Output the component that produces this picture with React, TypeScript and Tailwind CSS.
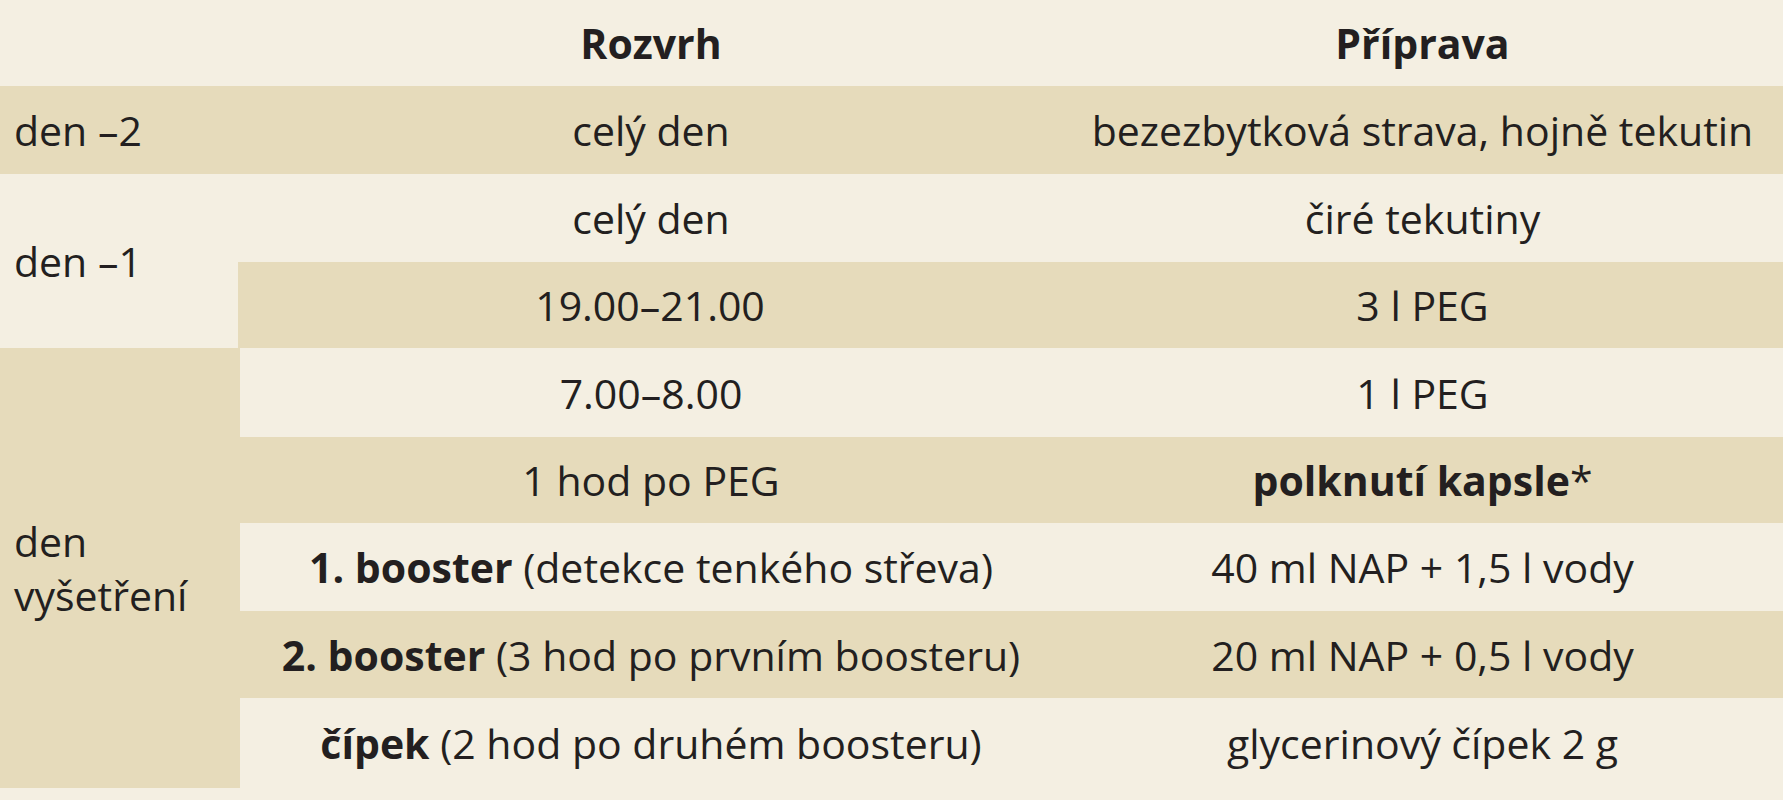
import React from "react";

const F = { fontFamily: '"Open Sans", "Noto Sans", sans-serif' };

export default function App() {
  const light = "bg-[#f4efe2]";
  const dark = "bg-[#e6dbbb]";
  const cell = "flex items-center justify-center text-center";
  return (
    <div className={`w-[1783px] h-[800px] ${light} text-[#231f20] text-[41px] leading-[54px]`} style={F}>
      <div className="grid grid-cols-[240px_822px_1fr] grid-rows-[86px_88px_88px_86px_89px_86px_88px_87px_90px]">
        <div className={light}></div>
        <div className={`${cell} font-bold`}>Rozvrh</div>
        <div className={`${cell} font-bold`}>Příprava</div>

        <div className={`${dark} flex items-center pl-[14px]`}>den –2</div>
        <div className={`${dark} ${cell}`}>celý den</div>
        <div className={`${dark} ${cell}`}>bezezbytková strava, hojně tekutin</div>

        <div className={`${light} row-span-2 flex items-center pl-[14px]`}>den –1</div>
        <div className={`${light} ${cell}`}>celý den</div>
        <div className={`${light} ${cell}`}>čiré tekutiny</div>
        <div className={`${dark} ${cell} -ml-[2px]`}>19.00–21.00</div>
        <div className={`${dark} ${cell}`}>3 l PEG</div>

        <div className={`${dark} row-span-6 flex items-center pl-[14px]`}>
          <span>
            den
            <br />
            vyšetření
          </span>
        </div>
        <div className={`${light} ${cell}`}>7.00–8.00</div>
        <div className={`${light} ${cell}`}>1 l PEG</div>
        <div className={`${dark} ${cell}`}>1 hod po PEG</div>
        <div className={`${dark} ${cell}`}>
          <span><b>polknutí kapsle</b>*</span>
        </div>
        <div className={`${light} ${cell}`}>
          <span><b>1. booster</b> (detekce tenkého střeva)</span>
        </div>
        <div className={`${light} ${cell}`}>40 ml NAP + 1,5 l vody</div>
        <div className={`${dark} ${cell}`}>
          <span><b>2. booster</b> (3 hod po prvním boosteru)</span>
        </div>
        <div className={`${dark} ${cell}`}>20 ml NAP + 0,5 l vody</div>
        <div className={`${light} ${cell}`}>
          <span><b>čípek</b> (2 hod po druhém boosteru)</span>
        </div>
        <div className={`${light} ${cell}`}>glycerinový čípek 2 g</div>
      </div>
    </div>
  );
}
